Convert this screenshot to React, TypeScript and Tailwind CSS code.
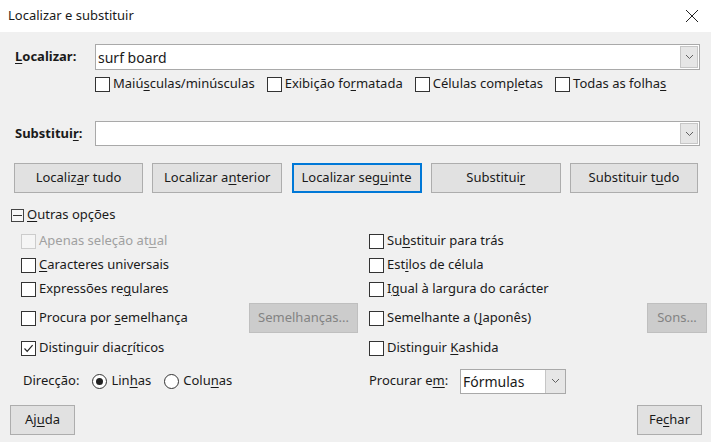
import React from 'react';

const FONT = { fontFamily: '"Noto Sans", "Open Sans", sans-serif' };

function U({ t, k }: { t: string; k?: number }) {
  if (k === undefined) return <>{t}</>;
  return (
    <>
      {t.slice(0, k)}
      <span className="underline underline-offset-2 decoration-1">{t[k]}</span>
      {t.slice(k + 1)}
    </>
  );
}

function Check({ label, k, checked, disabled }: { label: string; k?: number; checked?: boolean; disabled?: boolean }) {
  return (
    <div className={`flex items-center gap-[3px] ${disabled ? 'text-[#a0a0a0]' : 'text-[#1a1a1a]'}`}>
      <span
        className={`w-[15px] h-[15px] border flex items-center justify-center shrink-0 ${
          disabled ? 'border-[#cccccc] bg-[#f5f5f5]' : 'border-[#333] bg-white'
        }`}
      >
        {checked && (
          <svg width="11" height="11" viewBox="0 0 11 11">
            <path d="M1.5 5.5 L4.2 8.3 L9.6 2.2" fill="none" stroke="#222" strokeWidth="1.2" />
          </svg>
        )}
      </span>
      <span>
        <U t={label} k={k} />
      </span>
    </div>
  );
}

function Radio({ label, k, checked }: { label: string; k: number; checked?: boolean }) {
  return (
    <div className="flex items-center gap-[4px]">
      <span className="w-[15px] h-[15px] rounded-full border border-[#333] bg-white flex items-center justify-center">
        {checked && <span className="w-[7px] h-[7px] rounded-full bg-[#222]" />}
      </span>
      <span>
        <U t={label} k={k} />
      </span>
    </div>
  );
}

function Btn({ label, k, w, focus, disabled }: { label: string; k?: number; w: string; focus?: boolean; disabled?: boolean }) {
  return (
    <div
      className={`${w} h-[30px] flex items-center justify-center ${
        focus
          ? 'border-2 border-[#0078d7] bg-[#e1e1e1]'
          : disabled
          ? 'border border-[#bfbfbf] bg-[#cccccc] text-[#838383]'
          : 'border border-[#adadad] bg-[#e1e1e1]'
      }`}
    >
      <U t={label} k={k} />
    </div>
  );
}

function Chevron() {
  return (
    <svg width="9" height="6" viewBox="0 0 9 6">
      <path d="M1 1 L4.5 4.5 L8 1" fill="none" stroke="#606060" strokeWidth="1" />
    </svg>
  );
}

function Combo({ value, h }: { value?: string; h: string }) {
  return (
    <div className={`flex-1 ${h} border border-[#a9a9a9] bg-white flex items-stretch`}>
      <div className="flex-1 pl-[2px] flex items-center text-[14px]">{value}</div>
      <div className="w-[18px] my-[1px] mr-[1px] bg-[#e6e6e6] border border-[#c6c6c6] flex items-center justify-center">
        <Chevron />
      </div>
    </div>
  );
}

export default function App() {
  return (
    <div className="w-[711px] h-[442px] bg-[#f0f0f0] text-[13px] text-[#1a1a1a] flex flex-col overflow-hidden" style={FONT}>
      {/* title bar */}
      <div className="h-[32px] bg-white flex items-center justify-between pl-[8px] pr-[12px] shrink-0">
        <span className="text-[13px]">Localizar e substituir</span>
        <svg width="14" height="14" viewBox="0 0 14 14">
          <path d="M1 1 L13 13 M13 1 L1 13" stroke="#222" strokeWidth="1" />
        </svg>
      </div>

      <div className="flex-1 flex flex-col pl-[14px] pr-[11px]">
        {/* localizar */}
        <div className="flex items-center mt-[12px] pl-[1px]">
          <span className="w-[80px] font-bold">
            <U t="Localizar:" k={0} />
          </span>
          <Combo value="surf board" h="h-[26px]" />
        </div>
        <div className="flex items-center ml-[81px] mt-[6px] h-[16px] gap-[12px]">
          <Check label="Maiúsculas/minúsculas" k={4} />
          <Check label="Exibição formatada" k={11} />
          <Check label="Células completas" k={12} />
          <Check label="Todas as folhas" k={14} />
        </div>

        {/* substituir */}
        <div className="flex items-center mt-[29px] pl-[1px]">
          <span className="w-[80px] font-bold">
            <U t="Substituir:" k={9} />
          </span>
          <Combo h="h-[25px]" />
        </div>

        {/* buttons */}
        <div className="flex items-center justify-between mt-[17px] pr-[2px]">
          <Btn label="Localizar tudo" k={7} w="w-[129px]" />
          <Btn label="Localizar anterior" k={11} w="w-[130px]" />
          <Btn label="Localizar seguinte" k={13} w="w-[130px]" focus />
          <Btn label="Substituir" k={9} w="w-[130px]" />
          <Btn label="Substituir tudo" k={12} w="w-[128px]" />
        </div>

        {/* outras opções */}
        <div className="flex items-center gap-[3px] mt-[13px] h-[18px] -ml-[3px]">
          <span className="w-[13px] h-[13px] border border-[#444] bg-[#f7f7f7] flex items-center justify-center">
            <span className="w-[9px] h-[1px] bg-[#333]" />
          </span>
          <span>
            <U t="Outras opções" k={0} />
          </span>
        </div>

        <div className="grid grid-cols-[348px_1fr] mt-[5px] pl-[7px]">
          <div className="flex flex-col">
            <div className="h-[24px] flex items-center">
              <Check label="Apenas seleção atual" k={17} disabled />
            </div>
            <div className="h-[24px] flex items-center">
              <Check label="Caracteres universais" k={0} />
            </div>
            <div className="h-[24px] flex items-center">
              <Check label="Expressões regulares" k={13} />
            </div>
            <div className="h-[30px] mt-[2px] flex items-center justify-between pr-[11px]">
              <Check label="Procura por semelhança" k={12} />
              <Btn label="Semelhanças..." w="w-[109px]" disabled />
            </div>
            <div className="h-[30px] flex items-center">
              <Check label="Distinguir diacríticos" k={15} checked />
            </div>
          </div>
          <div className="flex flex-col">
            <div className="h-[24px] flex items-center">
              <Check label="Substituir para trás" k={2} />
            </div>
            <div className="h-[24px] flex items-center">
              <Check label="Estilos de célula" k={3} />
            </div>
            <div className="h-[24px] flex items-center">
              <Check label="Igual à largura do carácter" k={1} />
            </div>
            <div className="h-[30px] mt-[2px] flex items-center justify-between -mr-[7px]">
              <Check label="Semelhante a (Japonês)" k={14} />
              <Btn label="Sons..." w="w-[60px]" disabled />
            </div>
            <div className="h-[30px] flex items-center">
              <Check label="Distinguir Kashida" k={11} />
            </div>
          </div>
        </div>

        {/* direcção / procurar em */}
        <div className="grid grid-cols-[348px_1fr] mt-[5px] h-[26px] pl-[9px]">
          <div className="flex items-center gap-[13px]">
            <span>Direcção:</span>
            <div className="flex items-center gap-[13px]">
              <Radio label="Linhas" k={3} checked />
              <Radio label="Colunas" k={4} />
            </div>
          </div>
          <div className="flex items-center -ml-[2px]">
            <span className="w-[91px]">
              <U t="Procurar em:" k={10} />
            </span>
            <div className="w-[106px] h-[25px] border border-[#a9a9a9] bg-white flex items-stretch">
              <div className="flex-1 pl-[2px] flex items-center text-[14px]">Fórmulas</div>
              <div className="w-[20px] bg-[#e6e6e6] border-l border-[#c6c6c6] flex items-center justify-center">
                <Chevron />
              </div>
            </div>
          </div>
        </div>

        {/* bottom */}
        <div className="flex items-center justify-between mt-[11px] -ml-[4px] -mr-[2px]">
          <Btn label="Ajuda" k={2} w="w-[65px]" />
          <Btn label="Fechar" k={2} w="w-[65px]" />
        </div>
      </div>
    </div>
  );
}
